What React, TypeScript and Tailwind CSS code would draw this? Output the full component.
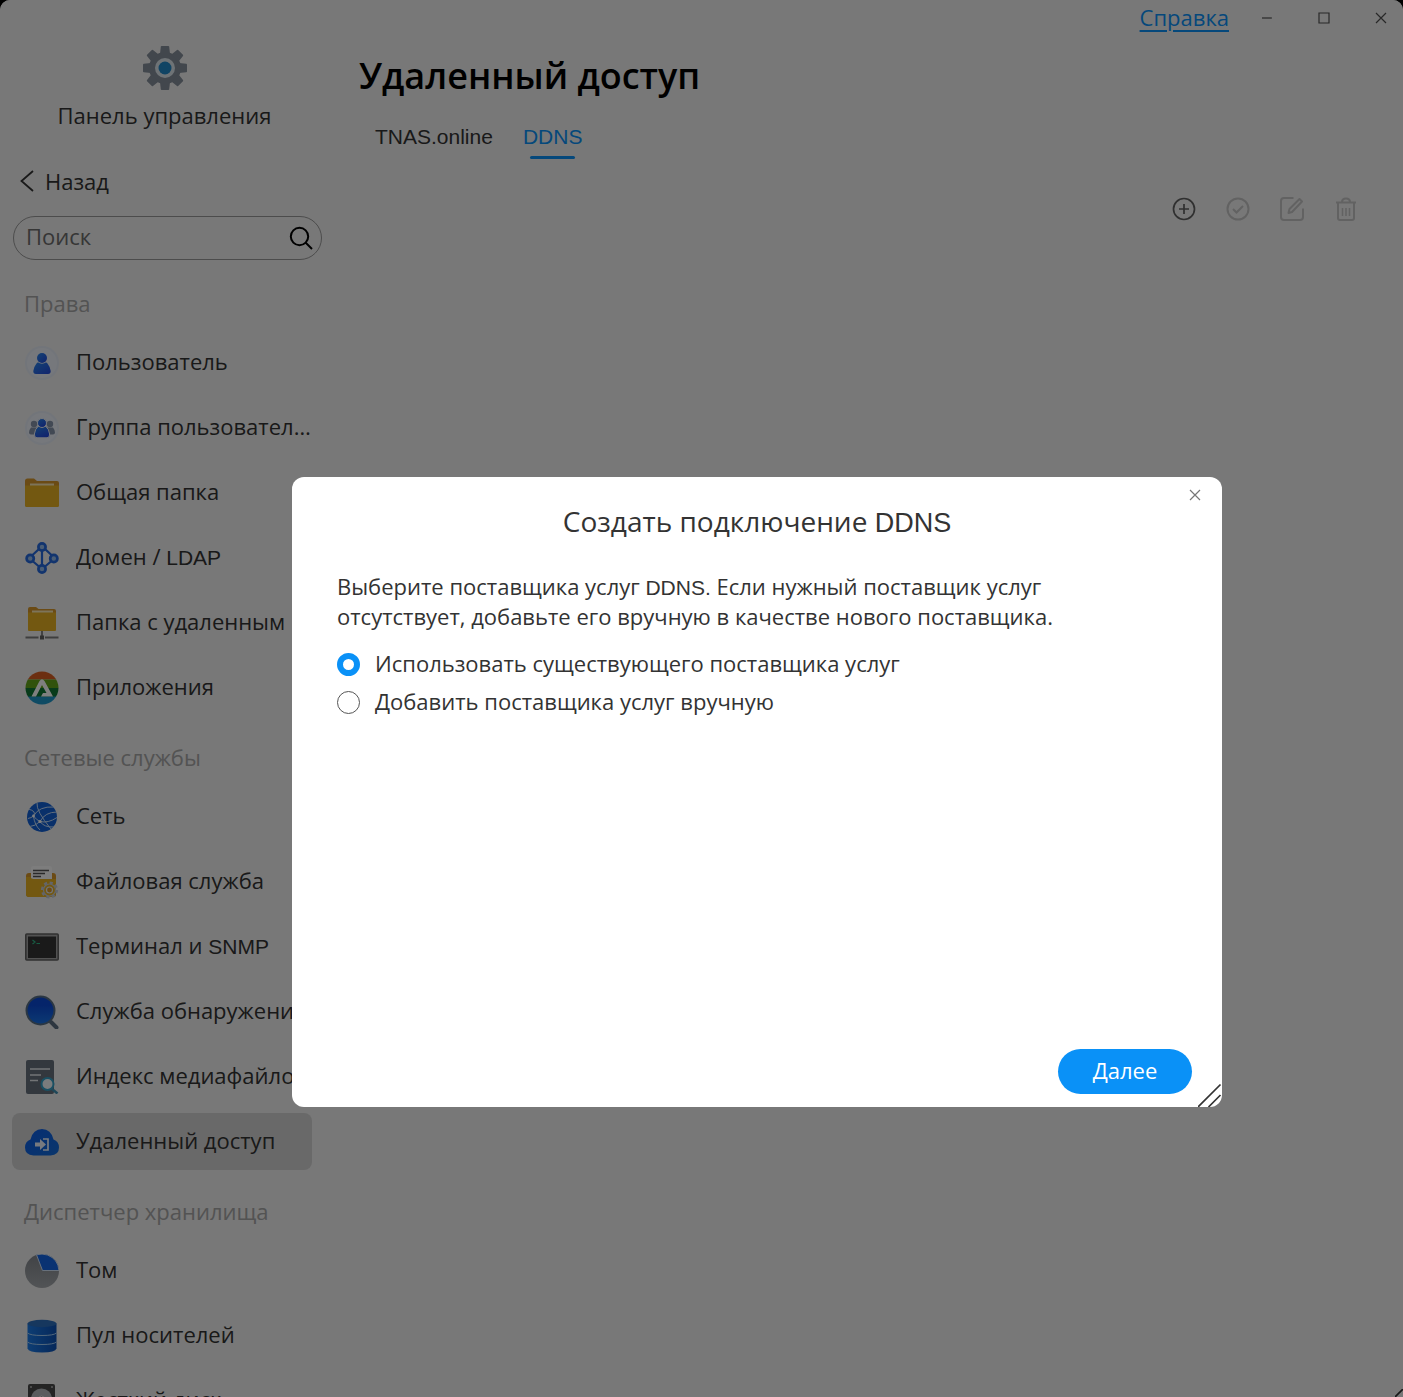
import React, { useState } from "react";

type IconProps = { children: React.ReactNode };

function NavIcon({ children }: IconProps) {
  return (
    <svg viewBox="0 0 34 34" className="size-[34px] shrink-0" fill="none" aria-hidden="true">
      {children}
    </svg>
  );
}

function Latin({ children }: { children: React.ReactNode }) {
  return <span className="font-['Liberation_Sans',Arial,sans-serif] text-[21px] leading-none">{children}</span>;
}

const UserIcon = () => (
  <NavIcon>
    <defs>
      <linearGradient id="user-fill" x1="0" y1="0" x2="1" y2="1">
        <stop stopColor="#2a86e8" />
        <stop offset="1" stopColor="#2348dc" />
      </linearGradient>
    </defs>
    <circle cx="17" cy="17" r="17" fill="#e4eaf5" />
    <circle cx="17" cy="17" r="15" fill="#edf1f8" />
    <path d="M11.500 17.500q1.200-1.600 3-1.200h5q1.800-.4 3 1.200Q25.300 21 25.700 25q.1 3-2.700 3H11q-2.800 0-2.700-3 .4-4 3.200-7.500z" fill="url(#user-fill)" />
    <circle cx="17" cy="12" r="5.800" fill="#edf1f8" />
    <circle cx="17" cy="12" r="5" fill="url(#user-fill)" />
  </NavIcon>
);

const GroupIcon = () => (
  <NavIcon>
    <defs>
      <linearGradient id="group-fill" x1="0" y1="0" x2="0.600" y2="1">
        <stop stopColor="#2a86e8" />
        <stop offset="1" stopColor="#2348dc" />
      </linearGradient>
    </defs>
    <circle cx="17" cy="17" r="17" fill="#e4eaf5" />
    <circle cx="17" cy="17" r="15" fill="#edf1f8" />
    <g fill="#8492a8">
      <circle cx="9" cy="13" r="3.200" />
      <circle cx="25" cy="13" r="3.200" />
      <path d="M6 16.500h6v7H6q-2 0-2-2 .3-3 2-5zM28 16.500h-6v7h6q2 0 2-2-.3-3-2-5z" />
    </g>
    <path d="M13 15.500h8q3 2.500 3.600 7.500.4 3.800-2.600 3.800H12q-3 0-2.600-3.800.6-5 3.600-7.500z" fill="url(#group-fill)" stroke="#edf1f8" strokeWidth="1" />
    <circle cx="17" cy="12" r="4.500" fill="url(#group-fill)" stroke="#edf1f8" strokeWidth="1" />
  </NavIcon>
);

const FolderIcon = () => (
  <NavIcon>
    <path d="M0 5Q0 2.500 2.500 2.500H9l3 2.500h20q2 0 2 2V30H0z" fill="#d6962a" />
    <path d="M5 7.500h24v4H5z" fill="#fbe9b4" />
    <path d="M0 9.500h34V29.500q0 1.500-1.500 1.500h-31Q0 31 0 29.500z" fill="#e6b022" />
  </NavIcon>
);

const DomainIcon = () => (
  <NavIcon>
    <g stroke="#2468dc" strokeWidth="2.700">
      <path d="M14 8 7 14.500M20 8l7 6.500M7.500 20l6.500 5.500M26.500 20 20 25.500M17 9.500v15" strokeWidth="2.200" />
      <circle cx="17" cy="6" r="3.600" fill="#96bce8" />
      <circle cx="17" cy="28" r="3.600" fill="#96bce8" />
      <circle cx="5.200" cy="17.500" r="3.600" fill="#96bce8" />
      <circle cx="28.800" cy="17.500" r="3.600" fill="#96bce8" />
    </g>
  </NavIcon>
);

const RemoteFolderIcon = () => (
  <NavIcon>
    <path d="M3 3Q3 1 5 1h6l2.500 2H29q2 0 2 2v19H3z" fill="#d6962a" />
    <path d="M7 4.500h21V8H7z" fill="#fbe9b4" />
    <path d="M3 6.500h28V24q0 1-1 1H4q-1 0-1-1z" fill="#e6b022" />
    <path d="M17 25v6M.5 31.500h13M20 31.500h13.500" stroke="#7c7c7c" strokeWidth="1.800" />
    <path d="M15 29.500h4v4h-4z" fill="#606060" />
  </NavIcon>
);

const AppsIcon = () => (
  <NavIcon>
    <defs>
      <clipPath id="apps-clip">
        <circle cx="17" cy="17" r="16.500" />
      </clipPath>
    </defs>
    <g clipPath="url(#apps-clip)">
      <path d="M0 0h34v8.500H0z" fill="#d85f22" />
      <path d="M0 8.500h34v8.500H0z" fill="#62a418" />
      <path d="M0 17h34v9H0z" fill="#107634" />
      <path d="M0 25.500h34V34H0z" fill="#1f96c8" />
    </g>
    <path d="M6.500 25.500 14.500 10Q17 6.500 19.500 10L28 25.500H16l2-3.500h3.500L17 14l-6 11.500z" fill="#fff" />
  </NavIcon>
);

const NetworkIcon = () => (
  <NavIcon>
    <defs>
      <clipPath id="net-clip">
        <circle cx="17" cy="17" r="15" />
      </clipPath>
    </defs>
    <circle cx="17" cy="17" r="15" fill="#1260d4" />
    <g clipPath="url(#net-clip)" stroke="#c4dcf8" strokeWidth="1">
      <path d="M3 9q9 2 5.500 7M8.500 16Q14 6 29 7M8.500 16q1 9 6.500 14M3 18.500Q6 18 8.500 16q3 4 6.500 5.500M15 21.500Q20 12 32 12M15 21.500q8 2 17-4M15 21.500q4 6 14 5.500M12 3q-1 8 14 26M3 27q8-1 12-5.500" />
    </g>
    <circle cx="15" cy="21.500" r="1.600" fill="#fff" />
    <circle cx="8.500" cy="16" r="1.400" fill="#fff" />
  </NavIcon>
);

const FileServiceIcon = () => (
  <NavIcon>
    <path d="M1 11q0-3 3-3h24q3 0 3 3v18q0 3-3 3H4q-3 0-3-3z" fill="#d6962a" />
    <path d="M6 3q0-2 2-2h17q2 0 2 2v12H6z" fill="#fafafa" />
    <path d="M8 5.500h16M8 8.500h12M8 11.500h8" stroke="#555" strokeWidth="1.300" />
    <path d="M1 12h4.500q.5 2 3 2H31V29q0 3-3 3H4q-3 0-3-3z" fill="#e6b022" />
    <circle cx="24.500" cy="25" r="7.400" stroke="#c6ccd6" strokeWidth="2.400" strokeDasharray="3.200 2.600" />
    <circle cx="24.500" cy="25" r="6" fill="#e6b022" stroke="#c6ccd6" strokeWidth="1.200" />
    <circle cx="24.500" cy="25" r="3" fill="#d6962a" stroke="#e6e8ec" strokeWidth="1.200" />
  </NavIcon>
);

const TerminalIcon = () => (
  <NavIcon>
    <rect x="0.800" y="4" width="32.400" height="26" rx="1" fill="#a4a4a4" stroke="#606060" strokeWidth="1.600" />
    <path d="M3 6.500h28v21.500H3z" fill="#343434" />
    <path d="m7.500 10 2.500 2-2.500 2M11.500 13.500H15" stroke="#2fb887" strokeWidth="1.200" />
  </NavIcon>
);

const DiscoveryIcon = () => (
  <NavIcon>
    <defs>
      <linearGradient id="disc-fill" x1="0" y1="0" x2="0" y2="1">
        <stop offset="0.300" stopColor="#0a48d4" />
        <stop offset="1" stopColor="#1874e8" />
      </linearGradient>
    </defs>
    <path d="m26 27 5.500 5.500" stroke="#5c6e80" strokeWidth="4" strokeLinecap="round" />
    <circle cx="15.500" cy="15.500" r="14" fill="url(#disc-fill)" stroke="#566e86" strokeWidth="2" />
  </NavIcon>
);

const MediaIndexIcon = () => (
  <NavIcon>
    <path d="M1 2q0-2 2-2h24q2 0 2 2v30q0 2-2 2H3q-2 0-2-2z" fill="#66707c" />
    <path d="M5 9h20M5 15h11M5 20.500h8" stroke="#e4e8ec" strokeWidth="1.600" />
    <path d="m27 29 5.500 4.500" stroke="#3e8eb0" strokeWidth="2.500" />
    <circle cx="22.500" cy="24" r="6" fill="#f4f8fb" stroke="#35a0c6" strokeWidth="2" />
  </NavIcon>
);

const RemoteAccessIcon = () => (
  <NavIcon>
    <defs>
      <linearGradient id="cloud-fill" x1="0" y1="0" x2="1" y2="1">
        <stop stopColor="#0c5ce6" />
        <stop offset="1" stopColor="#146cd8" />
      </linearGradient>
    </defs>
    <path d="M8.500 30.500Q0 30 0 22.500q0-6 5.500-8Q8 4 17 4t11.500 10.500q5.500 2 5.500 8 0 7.500-8.500 8z" fill="url(#cloud-fill)" />
    <path d="M10 17.500h5V14l6 5.500-6 5.500v-3.500h-5z" fill="#eef5ff" />
    <path d="M18 14h5v11h-5" stroke="#eef5ff" strokeWidth="1.700" />
  </NavIcon>
);

const VolumeIcon = () => (
  <NavIcon>
    <defs>
      <linearGradient id="vol-fill" x1="0" y1="0" x2="0" y2="1">
        <stop stopColor="#82868c" />
        <stop offset="1" stopColor="#a4a8ac" />
      </linearGradient>
    </defs>
    <circle cx="17" cy="17" r="17" fill="url(#vol-fill)" />
    <path d="M17.500 16.500 11.500.8Q17-.8 22.500 1 33 5 34 16.500z" fill="#1264e4" stroke="#cfe0f6" strokeWidth="1" />
  </NavIcon>
);

const PoolIcon = () => (
  <NavIcon>
    <defs>
      <linearGradient id="pool-fill" x1="0" y1="0" x2="1" y2="0">
        <stop stopColor="#1c7ce8" />
        <stop offset="1" stopColor="#0c50b4" />
      </linearGradient>
    </defs>
    <path d="M2.500 4.500v25q1 4 14.500 4t14.500-4v-25z" fill="url(#pool-fill)" />
    <ellipse cx="17" cy="4.500" rx="14.500" ry="3.700" fill="#2c6ebc" />
    <path d="M2.500 14q3 2.500 14.500 2.500T31.500 14M2.500 23Q5.500 25.500 17 25.500T31.500 23" stroke="#a6d0f6" strokeWidth="1" />
  </NavIcon>
);

const DiskIcon = () => (
  <NavIcon>
    <rect x="3" y="0" width="27" height="33" rx="2" fill="#484848" />
    <circle cx="16.500" cy="15" r="10.500" fill="#b4b8bc" />
    <circle cx="16.500" cy="15" r="3" fill="#6a7076" stroke="#e8e8e8" />
    <g fill="#b0b0b0">
      <circle cx="6" cy="3" r="1" />
      <circle cx="27" cy="3" r="1" />
    </g>
  </NavIcon>
);

const sections = [
  {
    title: "Права",
    items: [
      { label: "Пользователь", icon: <UserIcon /> },
      { label: "Группа пользователей", icon: <GroupIcon /> },
      { label: "Общая папка", icon: <FolderIcon /> },
      { label: <>Домен / <Latin>LDAP</Latin></>, icon: <DomainIcon /> },
      { label: "Папка с удаленным доступом", icon: <RemoteFolderIcon /> },
      { label: "Приложения", icon: <AppsIcon /> },
    ],
  },
  {
    title: "Сетевые службы",
    items: [
      { label: "Сеть", icon: <NetworkIcon /> },
      { label: "Файловая служба", icon: <FileServiceIcon /> },
      { label: <>Терминал и <Latin>SNMP</Latin></>, icon: <TerminalIcon /> },
      { label: "Служба обнаружения", icon: <DiscoveryIcon /> },
      { label: "Индекс медиафайлов", icon: <MediaIndexIcon /> },
      { label: "Удаленный доступ", icon: <RemoteAccessIcon />, active: true },
    ],
  },
  {
    title: "Диспетчер хранилища",
    items: [
      { label: "Том", icon: <VolumeIcon /> },
      { label: "Пул носителей", icon: <PoolIcon /> },
      { label: "Жесткий диск", icon: <DiskIcon /> },
    ],
  },
];

function Gear() {
  return (
    <svg viewBox="-22 -22 44 44" className="size-11" aria-hidden="true">
      <g fill="#848e9a">
        <circle r="16" />
        {[0, 45, 90, 135, 180, 225, 270, 315].map((a) => (
          <path key={a} transform={`rotate(${a})`} d="M-5-14-4.200-21.200q.1-.8.800-.8h6.800q.7 0 .8.800L5-14z" />
        ))}
      </g>
      <circle r="10" fill="#dde6ec" />
      <circle r="6.500" fill="#2088c8" />
    </svg>
  );
}

function Sidebar() {
  return (
    <aside className="flex w-[329px] shrink-0 flex-col pl-3 pt-[46px]">
      <div className="flex flex-col items-center pr-3">
        <Gear />
        <p className="mt-[10px] leading-[30px]">Панель управления</p>
      </div>
      <button type="button" className="mt-9 flex h-[30px] items-center self-start pl-2">
        <svg viewBox="0 0 14 22" className="h-[22px] w-[14px]" fill="none" stroke="currentColor" strokeWidth="1.800" aria-hidden="true">
          <path d="M13 1 1.500 11 13 21" />
        </svg>
        <span className="pl-[11px]">Назад</span>
      </button>
      <label className="ml-px mr-[7px] mt-5 flex h-11 shrink-0 items-center rounded-full border border-[#999] pl-3 pr-2">
        <input type="search" aria-label="Поиск" placeholder="Поиск" className="min-w-0 flex-1 bg-transparent pb-1 outline-none placeholder:text-[#6c6c6c] placeholder:opacity-100" />
        <svg viewBox="0 0 24 24" className="size-6" fill="none" stroke="#000" strokeWidth="2" aria-hidden="true">
          <circle cx="10.500" cy="10.500" r="8.700" />
          <path d="m16.500 16.500 6.500 6.500" />
        </svg>
      </label>
      <nav className="mt-7 flex flex-col gap-[26px] pr-[17px]">
        {sections.map((s) => (
          <section key={s.title}>
            <h2 className="mb-4 pl-3 leading-[30px] text-[#a6a6a6]">{s.title}</h2>
            <ul className="flex flex-col gap-2">
              {s.items.map((it, i) => (
                <li key={i}>
                  <a
                    href="#"
                    className={
                      "active" in it && it.active
                        ? "flex h-[57px] items-center gap-[17px] rounded-lg bg-[#d2d2d2] pl-[13px]"
                        : "flex h-[57px] items-center gap-[17px] pl-[13px]"
                    }
                  >
                    {it.icon}
                    <span className="min-w-0 flex-1 truncate pb-1 leading-[30px]">{it.label}</span>
                  </a>
                </li>
              ))}
            </ul>
          </section>
        ))}
      </nav>
    </aside>
  );
}

function WindowBar() {
  return (
    <div className="flex h-9 items-center justify-end">
      <a href="#" className="mr-[9px] pb-0.5 text-[#0a91f7] underline decoration-2 underline-offset-4">
        Справка
      </a>
      <button type="button" aria-label="Свернуть" className="grid h-9 w-[57px] place-items-center">
        <svg viewBox="0 0 12 12" className="size-3" fill="none" stroke="#505050" strokeWidth="1.200"><path d="M1 6h10" /></svg>
      </button>
      <button type="button" aria-label="Развернуть" className="grid h-9 w-[57px] place-items-center">
        <svg viewBox="0 0 12 12" className="size-3" fill="none" stroke="#505050" strokeWidth="1.200"><path d="M1 1h10v10H1z" /></svg>
      </button>
      <button type="button" aria-label="Закрыть" className="-mr-1.5 grid h-9 w-[57px] place-items-center">
        <svg viewBox="0 0 12 12" className="size-3" fill="none" stroke="#505050" strokeWidth="1.200"><path d="m1 1 10 10M11 1 1 11" /></svg>
      </button>
    </div>
  );
}

function Toolbar() {
  return (
    <div className="flex justify-end gap-[30px] pr-[45px] pt-[38px]">
      <button type="button" aria-label="Добавить" className="size-6 text-[#606060]">
        <svg viewBox="0 0 24 24" fill="none" stroke="currentColor" strokeWidth="1.700">
          <circle cx="12" cy="12" r="10.500" />
          <path d="M12 7v10M7 12h10" />
        </svg>
      </button>
      <button type="button" disabled aria-label="Применить" className="size-6 text-[#c4c4c4]">
        <svg viewBox="0 0 24 24" fill="none" stroke="currentColor" strokeWidth="2">
          <circle cx="12" cy="12" r="10.500" />
          <path d="m7 12 3.500 3.500L17 9" />
        </svg>
      </button>
      <button type="button" disabled aria-label="Изменить" className="size-6 text-[#c4c4c4]">
        <svg viewBox="0 0 24 24" fill="none" stroke="currentColor" strokeWidth="2" strokeLinejoin="round">
          <path d="M13.500 1H4Q1 1 1 4v16q0 3 3 3h16q3 0 3-3v-8.500" />
          <path d="M8.500 16 9.500 12 19.500 2l2.500 2.500L12 15z" />
        </svg>
      </button>
      <button type="button" disabled aria-label="Удалить" className="size-6 text-[#c4c4c4]">
        <svg viewBox="0 0 24 24" fill="none" stroke="currentColor" strokeWidth="2" strokeLinejoin="round">
          <path d="M2 5.500h20M8 5Q8 1.500 12 1.500T16 5M4 5.500V21q0 2 2 2h12q2 0 2-2V5.500" />
          <path d="M8.500 11v8M12 11v8M15.500 11v8" strokeWidth="1.500" />
        </svg>
      </button>
    </div>
  );
}

function CreateDialog() {
  const [mode, setMode] = useState("existing");
  const options = [
    { id: "existing", label: "Использовать существующего поставщика услуг" },
    { id: "manual", label: "Добавить поставщика услуг вручную" },
  ];
  return (
    <div className="fixed inset-0 flex items-center justify-center rounded-t-[10px] bg-black/50 pl-[111px] pt-[187px]">
      <div role="dialog" aria-modal="true" aria-labelledby="dialog-title" className="relative flex min-h-[630px] w-full max-w-[930px] flex-col rounded-xl bg-white px-[30px] pb-[13px] text-[#333]">
        <button type="button" aria-label="Закрыть окно" className="absolute right-[15px] top-[6px] grid size-6 place-items-center">
          <svg viewBox="0 0 12 12" className="size-3" fill="none" stroke="#777" strokeWidth="1.200"><path d="m1 1 10 10M11 1 1 11" /></svg>
        </button>
        <h2 id="dialog-title" className="pt-6 text-center text-[28px] leading-10">
          Создать подключение <span className="font-['Liberation_Sans',Arial,sans-serif] text-[27px] leading-none">DDNS</span>
        </h2>
        <div className="px-[15px] pt-[30px]">
          <p className="max-w-[740px] leading-[30px]">
            Выберите поставщика услуг <Latin>DDNS.</Latin> Если нужный поставщик услуг отсутствует, добавьте его вручную в качестве нового поставщика.
          </p>
          <div role="radiogroup" aria-label="Способ выбора поставщика" className="mt-[18px] flex flex-col gap-2">
            {options.map((o) => (
              <label key={o.id} className="flex h-[30px] items-center gap-[15px]">
                <input
                  type="radio"
                  name="provider"
                  checked={mode === o.id}
                  onChange={() => setMode(o.id)}
                  className="size-[23px] appearance-none rounded-full border border-[#555] bg-white checked:border-[6px] checked:border-[#0a91f7]"
                />
                <span className="pb-0.5">{o.label}</span>
              </label>
            ))}
          </div>
        </div>
        <button type="button" className="mt-auto h-[45px] w-[134px] self-end rounded-full bg-[#0a91f7] pb-1 font-medium text-white">
          Далее
        </button>
        <svg viewBox="0 0 24 24" className="absolute bottom-0 right-0 size-6" fill="none" stroke="#333" strokeWidth="1.700" aria-hidden="true">
          <path d="M0 24 22.500 1.500M10.500 24l12-12" />
        </svg>
      </div>
    </div>
  );
}

export default function App() {
  return (
    <div className="h-screen overflow-hidden bg-black font-['Open_Sans','Noto_Sans',sans-serif] text-[22px] leading-[30px] text-[#333]">
      <div className="relative flex h-full overflow-hidden rounded-t-[10px] bg-[#f0f0f0]">
        <Sidebar />
        <main className="min-w-0 flex-1">
          <WindowBar />
          <h1 className="pl-[30px] pt-4 text-4xl font-semibold leading-[48px] text-black">Удаленный доступ</h1>
          <div role="tablist" className="flex gap-[30px] pl-[46px] pt-[22px]">
            <button type="button" role="tab" aria-selected="false" className="flex h-[37px] items-start pt-1">
              <Latin>TNAS.online</Latin>
            </button>
            <button type="button" role="tab" aria-selected="true" className="flex h-[37px] flex-col items-center justify-between pt-1 text-[#0a91f7]">
              <Latin>DDNS</Latin>
              <span className="h-[3px] w-[45px] rounded-full bg-[#0a91f7]" />
            </button>
          </div>
          <Toolbar />
        </main>
        <svg viewBox="0 0 8 8" className="absolute bottom-0 right-0 size-2" fill="none" stroke="#333" strokeWidth="1.700" aria-hidden="true">
          <path d="M0 8 8 0" />
        </svg>
      </div>
      <CreateDialog />
    </div>
  );
}
